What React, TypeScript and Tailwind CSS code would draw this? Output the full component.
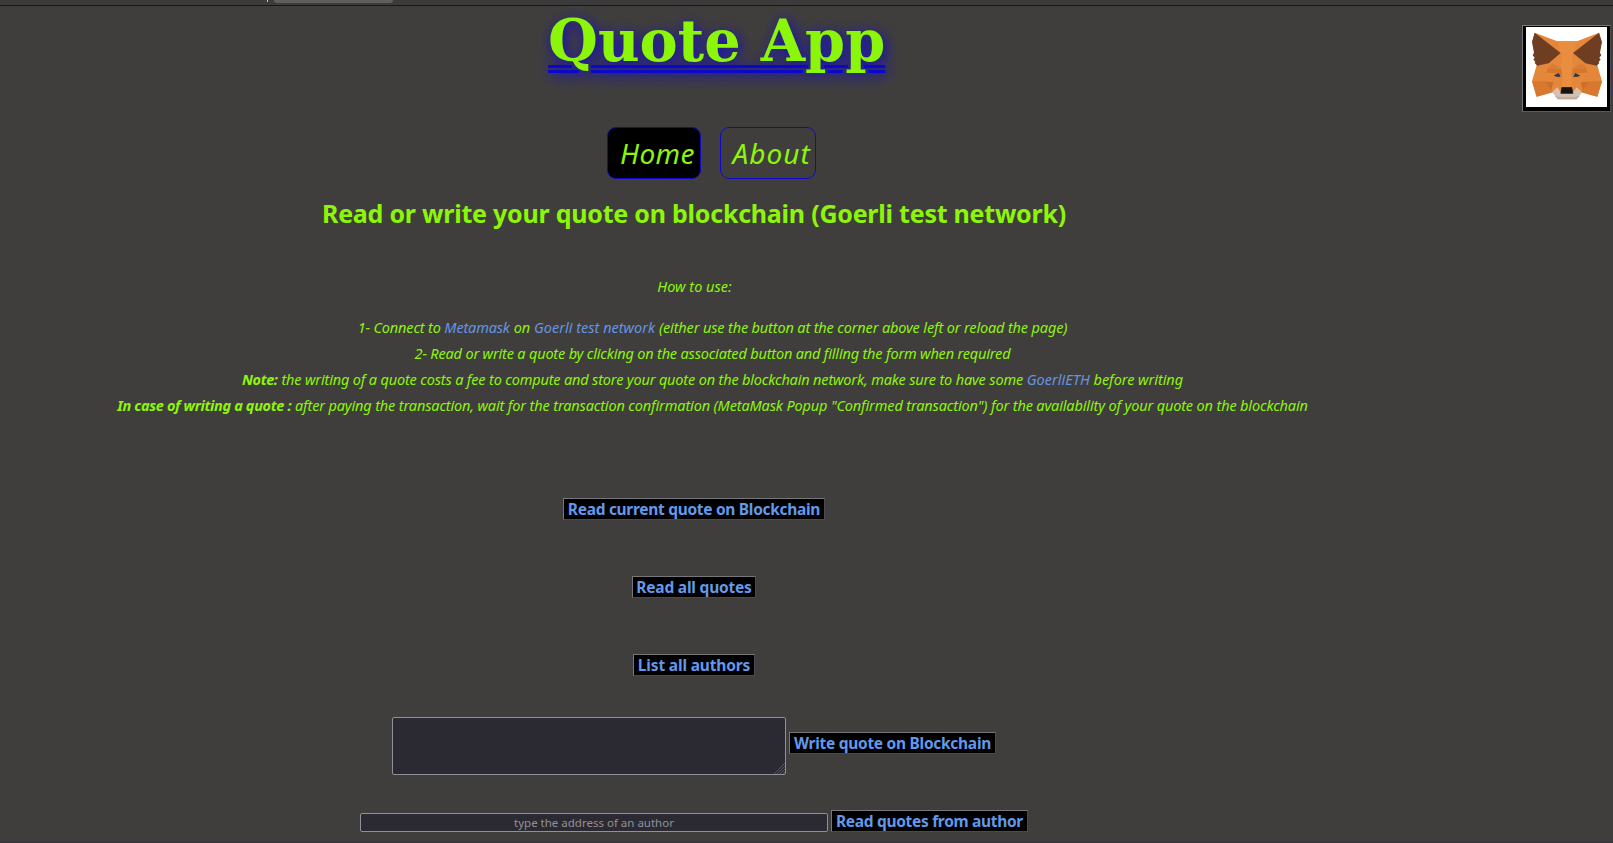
import React from "react";

function Fox() {
  return (
    <svg viewBox="0 0 234 234" className="h-[78px] w-[78px]" aria-hidden="true">
      <polygon fill="#d6c0b3" points="70,190 90,214 146,214 165,190 147,176 88,176" />
      <polygon fill="#c0ad9e" points="80,203 90,214 146,214 156,203 140,207 95,207" />
      <polygon
        fill="#e5873a"
        points="20,14 88,40 147,40 213,14 220,42 208,112 222,160 208,206 164,194 146,178 134,194 99,194 88,178 70,194 26,206 12,160 26,112 13,42"
      />
      <polygon fill="#e98d3f" points="98,76 88,40 147,40 135,76 130,178 103,178" />
      <polygon fill="#d8782f" points="12,160 54,160 75,192 26,206" />
      <polygon fill="#d8782f" points="222,160 180,160 159,192 208,206" />
      <polygon fill="#cb6e2d" points="52,161 76,163 70,186" />
      <polygon fill="#cb6e2d" points="182,161 158,163 164,186" />
      <polygon fill="#dc7c32" points="72,106 100,122 103,150 88,136 58,122" />
      <polygon fill="#dc7c32" points="162,106 134,122 131,150 146,136 176,122" />
      <polygon fill="#d57630" points="58,122 99,124 102,142 76,135 56,134" />
      <polygon fill="#d57630" points="176,122 135,124 132,142 158,135 178,134" />
      <polygon
        fill="#6f3e22"
        points="20,14 98,75 62,106 28,113 20,105 22,101 16,95 20,89 14,82 18,74 12,42"
      />
      <polygon
        fill="#6f3e22"
        points="213,14 135,75 172,106 206,113 214,105 212,101 218,95 214,89 220,82 216,74 222,42"
      />
      <polygon fill="#26384c" points="77,143 92,135 98,147 86,146" />
      <polygon fill="#26384c" points="157,143 142,135 136,147 148,146" />
      <polygon fill="#3a2c26" points="101,177 132,177 136,197 97,197" />
      <polygon fill="#141414" points="101,179 132,179 134,196 99,196" />
    </svg>
  );
}

function ActionButton({ className, children }: { className: string; children: React.ReactNode }) {
  return (
    <button
      className={`h-[22px] shrink-0 whitespace-nowrap border border-t-[#77777b] border-l-[#77777b] border-r-[#4c4a50] border-b-[#4c4a50] bg-black text-center text-[15.5px] leading-[21px] font-bold text-[#6299ea] ${className}`}
    >
      {children}
    </button>
  );
}

export default function App() {
  return (
    <div className="flex h-[843px] w-[1613px] flex-col overflow-hidden border-b border-[#383437] bg-[#403e3c] font-['Noto_Sans',sans-serif] text-[#8cf60a]">
      <div className="flex h-[6px] shrink-0 items-start border-b border-[#191919] bg-[#3b3b3b] pl-[267px]">
        <div className="h-[2px] w-px bg-[#c8c8c8]" />
        <div className="ml-[6px] h-[3px] w-[119px] rounded-b-[3px] bg-[#5f5f5f]" />
      </div>

      <div className="flex justify-between">
        <div className="w-[1388px] shrink-0">
          <header className="flex h-[121px] pl-[548px]">
            <h1 className="whitespace-nowrap font-['DejaVu_Serif',serif] text-[57.3px] leading-[71px] font-bold underline decoration-[#0b08cc] decoration-[3px] underline-offset-[4px] [text-shadow:2px_3px_14px_#0f08d0]">
              <span className="underline decoration-[#0b08cc] decoration-[3px] underline-offset-[9px]">Quote App</span>
            </h1>
          </header>

          <nav className="flex gap-[19px] pl-[607px] text-[28px] leading-[50px] italic">
            <a className="h-[52px] w-[94px] rounded-[9px] border border-[#1008c8] bg-black pl-[12px] tracking-[0.4px]">
              Home
            </a>
            <a className="h-[52px] w-[96px] rounded-[9px] border border-[#1008c8] pl-[11.5px] tracking-[1px]">
              About
            </a>
          </nav>

          <h2 className="mt-[14px] text-center text-[25px] leading-[40px] font-bold tracking-[-0.227px]">
            Read or write your quote on blockchain (Goerli test network)
          </h2>

          <section className="text-center text-[14.5px] leading-[26px] whitespace-nowrap italic">
            <p className="mt-[40px] pl-px">How to use:</p>
            <ul className="mt-[15px] pl-[37px]">
              <li>
                <span className="tracking-[-0.16px]">1- Connect to </span>
                <a className="tracking-[-0.17px] text-[#6495e3]">Metamask</a> on{" "}
                <a className="text-[#6495e3]">Goerli test network</a>{" "}
                <span className="tracking-[-0.15px]">
                  (either use the button at the corner above left or reload the page)
                </span>
              </li>
              <li className="tracking-[-0.18px]">
                2- Read or write a quote by clicking on the associated button and filling the form when required
              </li>
              <li>
                <b className="tracking-[-0.4px]">Note:</b>{" "}
                <span className="tracking-[-0.165px]">
                  the writing of a quote costs a fee to compute and store your quote on the blockchain network, make
                  sure to have some
                </span>{" "}
                <a className="text-[#6495e3]">GoerliETH</a> <span className="tracking-[-0.06px]">before writing</span>
              </li>
              <li className="tracking-[-0.145px]">
                <b className="tracking-[-0.34px]">In case of writing a quote :</b> after paying the transaction, wait
                for the transaction confirmation (MetaMask Popup "Confirmed transaction") for the availability of your
                quote on the blockchain
              </li>
            </ul>
          </section>

          <section className="mt-[80px] flex flex-col items-center">
            <ActionButton className="w-[262px] tracking-[-0.3px]">Read current quote on Blockchain</ActionButton>
            <ActionButton className="mt-[56px] w-[124px] tracking-[-0.2px]">Read all quotes</ActionButton>
            <ActionButton className="mt-[56px] w-[122px] tracking-[-0.16px]">List all authors</ActionButton>

            <div className="mt-[41px] flex items-start gap-[3px]">
              <div className="relative h-[58px] w-[394px] rounded-[2px] border border-[#8f8f9d] bg-[#2b2a33]">
                <svg viewBox="0 0 12 12" className="absolute right-0 bottom-0 h-[12px] w-[12px]" aria-hidden="true">
                  <path d="M1 12 12 1M4 12 12 4M7 12 12 7M10 12 12 10" stroke="#66656b" strokeWidth=".8" />
                </svg>
              </div>
              <ActionButton className="mt-[15px] w-[207px] tracking-[-0.28px]">Write quote on Blockchain</ActionButton>
            </div>

            <div className="mt-[35px] flex items-start gap-[3px]">
              <input
                placeholder="type the address of an author"
                className="mt-[3px] h-[19px] w-[468px] rounded-[2px] border border-[#8f8f9d] bg-[#2b2a33] text-center text-[11.5px] leading-[17px] outline-none placeholder:text-[#929196]"
              />
              <ActionButton className="w-[197px] tracking-[-0.31px]">Read quotes from author</ActionButton>
            </div>
          </section>
        </div>

        <button className="mt-[19px] mr-[2px] h-[87px] w-[89px] shrink-0 border border-t-[#77777b] border-l-[#77777b] border-r-[#4c4a50] border-b-[#5c5a60] bg-black px-[3px] pt-px pb-[4px]">
          <span className="flex h-[80px] w-[81px] items-start bg-white pt-px pl-[2px]">
            <Fox />
          </span>
        </button>
      </div>
    </div>
  );
}
